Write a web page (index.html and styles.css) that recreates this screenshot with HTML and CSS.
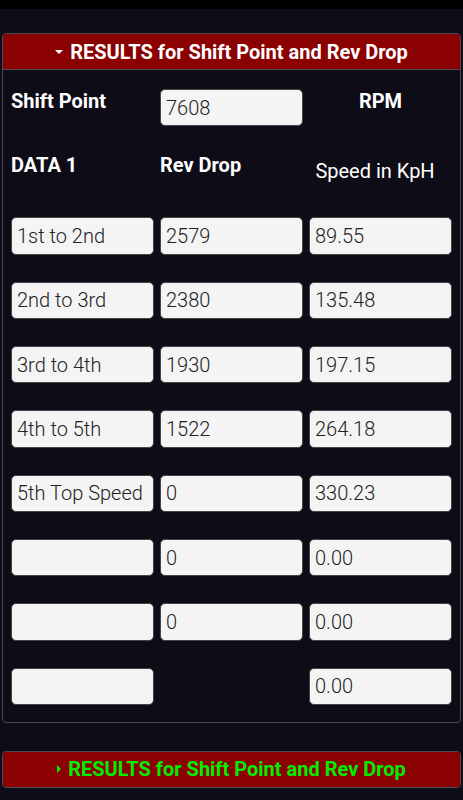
FILE: index.html
```html
<!DOCTYPE html>
<html>
<head>
<meta charset="utf-8">
<link rel="stylesheet" href="styles.css">
</head>
<body>
<div class="topbar"></div>
<main class="page">
  <section class="panel">
    <div class="panel-head"><span class="caret-down"></span>RESULTS for Shift Point and Rev Drop</div>
    <div class="panel-body">
      <div class="row first">
        <div class="label">Shift Point</div>
        <input class="field" value="7608">
        <div class="label center">RPM</div>
      </div>
      <div class="row heads">
        <div class="label">DATA 1</div>
        <div class="label">Rev Drop</div>
        <div class="label center normal">Speed in KpH</div>
      </div>
      <div class="row"><input class="field" value="1st to 2nd"><input class="field" value="2579"><input class="field" value="89.55"></div>
      <div class="row"><input class="field" value="2nd to 3rd"><input class="field" value="2380"><input class="field" value="135.48"></div>
      <div class="row"><input class="field" value="3rd to 4th"><input class="field" value="1930"><input class="field" value="197.15"></div>
      <div class="row"><input class="field" value="4th to 5th"><input class="field" value="1522"><input class="field" value="264.18"></div>
      <div class="row"><input class="field" value="5th Top Speed"><input class="field" value="0"><input class="field" value="330.23"></div>
      <div class="row"><input class="field" value=""><input class="field" value="0"><input class="field" value="0.00"></div>
      <div class="row"><input class="field" value=""><input class="field" value="0"><input class="field" value="0.00"></div>
      <div class="row"><input class="field" value=""><div></div><input class="field" value="0.00"></div>
    </div>
  </section>
  <section class="panel closed">
    <div class="panel-head green"><span class="caret-right"></span>RESULTS for Shift Point and Rev Drop</div>
  </section>
</main>
</body>
</html>
```
FILE: styles.css
```css
html, body {
  margin: 0;
  padding: 0;
  background: #0d0c17;
  font-family: Roboto, "Liberation Sans", sans-serif;
}
.topbar {
  height: 9px;
  background: #000;
}
.page {
  padding: 24px 2px 0 2px;
}
.panel {
  border: 1px solid #4a4a4f;
  border-radius: 4px;
  overflow: hidden;
}
.panel.closed {
  margin-top: 28px;
}
.panel-head {
  background: #8b0000;
  color: #fff;
  font-weight: 700;
  font-size: 20px;
  height: 35px;
  display: flex;
  align-items: center;
  justify-content: center;
  gap: 7px;
  border-bottom: 1px solid #4a4a4f;
}
.panel.closed .panel-head {
  border-bottom: none;
}
.panel-head.green {
  color: #00ee00;
}
.caret-down {
  width: 0;
  height: 0;
  border-left: 4px solid transparent;
  border-right: 4px solid transparent;
  border-top: 4px solid #fff;
}
.caret-right {
  width: 0;
  height: 0;
  border-top: 4px solid transparent;
  border-bottom: 4px solid transparent;
  border-left: 4px solid #00ee00;
}
.panel-body {
  padding: 19px 8px 17px 8px;
  display: flex;
  flex-direction: column;
  gap: 27px;
}
.row {
  display: grid;
  grid-template-columns: 143px 143px 143px;
  column-gap: 6px;
  align-items: start;
}
.row.heads {
  margin-bottom: 7px;
}
.label {
  color: #fff;
  font-weight: 700;
  font-size: 20px;
  line-height: 24px;
}
.label.center {
  text-align: center;
}
.label.normal {
  font-weight: 400;
  margin-top: 6px;
  padding-right: 11px;
}
.field {
  box-sizing: border-box;
  width: 143px;
  height: 37.33px;
  margin: 0;
  padding: 0 5px;
  border: 1.5px solid #444;
  border-radius: 5px;
  background: #f4f4f4;
  color: #222;
  font-family: Roboto, "Liberation Sans", sans-serif;
  font-weight: 300;
  font-size: 20px;
  outline: none;
}
```
